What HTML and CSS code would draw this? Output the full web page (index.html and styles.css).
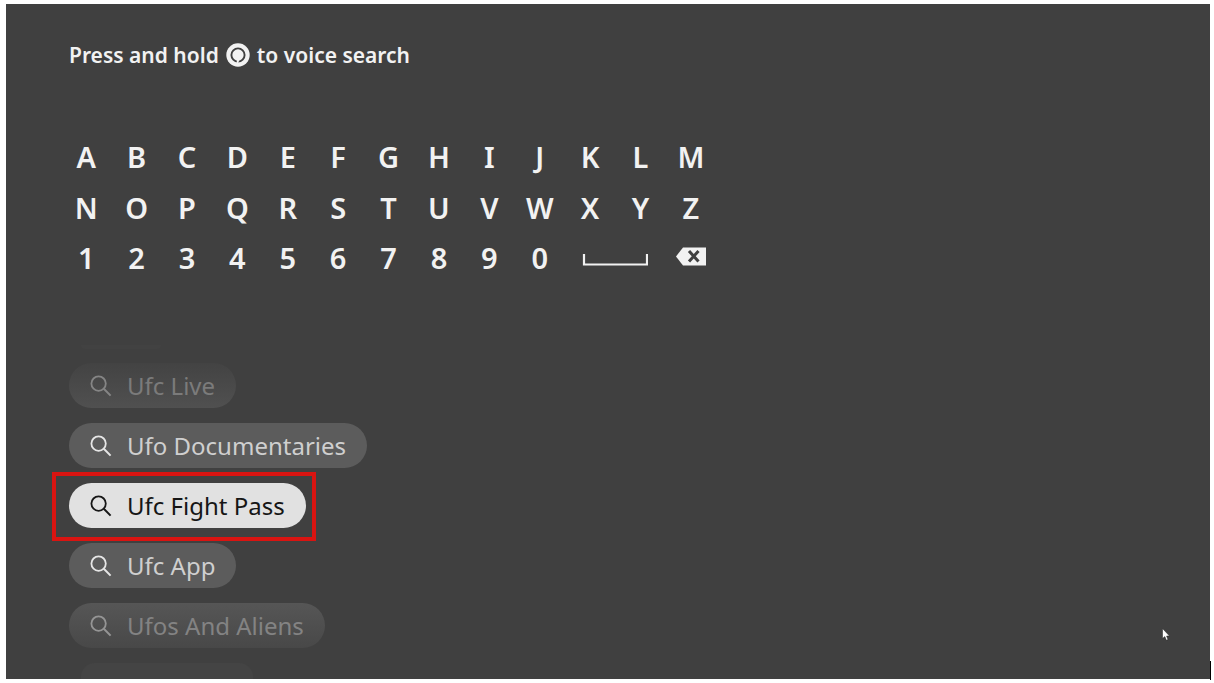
FILE: index.html
```
<!DOCTYPE html>
<html lang="en">
<head>
  <meta charset="UTF-8">
  <meta name="viewport" content="width=device-width, initial-scale=1.0">
  <title>Search</title>
  <link rel="stylesheet" href="styles.css">
</head>
<body>
  <svg class="defs" width="0" height="0" aria-hidden="true">
    <symbol id="search" viewBox="0 0 22 22">
      <circle cx="8.6" cy="8.6" r="7.2" fill="none" stroke="currentColor" stroke-width="1.8"/>
      <path d="M13.8 13.8 L20.6 20.6" fill="none" stroke="currentColor" stroke-width="2"/>
    </symbol>
  </svg>

  <main class="screen">
    <h1 class="hint">
      <span>Press and hold</span>
      <svg class="voice" viewBox="0 0 24 24" role="img" aria-label="the voice button">
        <circle cx="12" cy="12" r="11.7" fill="#f2f2f2"/>
        <circle cx="12" cy="12" r="6.6" fill="none" stroke="#404040" stroke-width="1.9"/>
        <path d="M10.8 16 H13.8 L12.2 20 H10.8 Z" fill="#f2f2f2"/>
      </svg>
      <span>to voice search</span>
    </h1>

    <div class="keyboard">
      <button>A</button>
      <button>B</button>
      <button>C</button>
      <button>D</button>
      <button>E</button>
      <button>F</button>
      <button>G</button>
      <button>H</button>
      <button>I</button>
      <button>J</button>
      <button>K</button>
      <button>L</button>
      <button>M</button>
      <button>N</button>
      <button>O</button>
      <button>P</button>
      <button>Q</button>
      <button>R</button>
      <button>S</button>
      <button>T</button>
      <button>U</button>
      <button>V</button>
      <button>W</button>
      <button>X</button>
      <button>Y</button>
      <button>Z</button>
      <button>1</button>
      <button>2</button>
      <button>3</button>
      <button>4</button>
      <button>5</button>
      <button>6</button>
      <button>7</button>
      <button>8</button>
      <button>9</button>
      <button>0</button>
      <button class="space" aria-label="Space">
        <svg width="66" height="22" viewBox="0 0 66 22"><path d="M2 7 V17.5 H65 V7" fill="none" stroke="currentColor" stroke-width="2.2"/></svg>
      </button>
      <button aria-label="Delete">
        <svg width="30" height="22" viewBox="0 0 30 22">
          <path d="M0 9.5 L7 0.5 H30 V18.5 H7 Z" fill="currentColor"/>
          <path d="M13 4 L22.5 14.5 M22.5 4 L13 14.5" fill="none" stroke="#404040" stroke-width="3"/>
        </svg>
      </button>
    </div>

    <div class="peek peek-top"></div>
    <ul class="suggestions">
      <li><button class="pill fade-top"><svg><use href="#search"/></svg>Ufc Live</button></li>
      <li><button class="pill"><svg><use href="#search"/></svg>Ufo Documentaries</button></li>
      <li class="marked"><button class="pill selected"><svg><use href="#search"/></svg>Ufc Fight Pass</button></li>
      <li><button class="pill"><svg><use href="#search"/></svg>Ufc App</button></li>
      <li><button class="pill fade-bottom"><svg><use href="#search"/></svg>Ufos And Aliens</button></li>
    </ul>
    <div class="peek peek-bottom"></div>

    <svg class="cursor" viewBox="0 0 8 13" aria-hidden="true">
      <path d="M0.5 0.5 V10.5 L2.8 8.6 L4.4 12.3 L6 11.6 L4.6 8 H7.5 Z" fill="#fff" stroke="#222" stroke-width="0.5"/>
    </svg>
  </main>
</body>
</html>
```
FILE: styles.css
```
* {
  box-sizing: border-box;
}

body {
  margin: 0;
  padding: 4px 4px 4px 6px;
  min-height: 100vh;
  display: flex;
  background: #fff;
  font-family: "Noto Sans", "Open Sans", sans-serif;
  color: #f2f2f2;
}

button {
  font: inherit;
  color: inherit;
  background: none;
  border: none;
  padding: 0;
  cursor: pointer;
}

.defs {
  position: absolute;
}

.screen {
  flex: 1;
  position: relative;
  display: flex;
  flex-direction: column;
  padding: 35px 63px 0;
  background: #404040;
  overflow: hidden;
}

/* Black sliver at the lower right of the screen */
body::after {
  content: "";
  position: absolute;
  right: 3px;
  bottom: 3px;
  width: 1px;
  height: 19px;
  background: #000;
}

.hint {
  display: flex;
  align-items: center;
  gap: 7px;
  margin: 0;
  font-size: 21px;
  line-height: 32px;
  font-weight: 600;
}

.voice {
  width: 24px;
  height: 24px;
}

/* Keyboard */
.keyboard {
  display: grid;
  grid-template-columns: repeat(13, 1fr);
  width: 100%;
  max-width: 655px;
  margin: 61px 0 0 -8px;
  font-size: 29px;
  line-height: 40px;
  font-weight: 600;
}

.keyboard button {
  display: flex;
  align-items: center;
  justify-content: center;
  aspect-ratio: 1;
}

.keyboard .space {
  grid-column: span 2;
  aspect-ratio: 2;
}

/* Suggestions */
.suggestions {
  list-style: none;
  margin: 0;
  padding: 0;
  display: flex;
  flex-direction: column;
  align-items: flex-start;
  gap: 15px;
}

.suggestions li {
  display: flex;
  position: relative;
}

.pill {
  display: flex;
  align-items: center;
  gap: 15px;
  height: 45px;
  padding: 0 21px;
  border-radius: 23px;
  background: #5c5c5c;
  color: #cfcfcf;
  font-size: 24px;
  white-space: nowrap;
}

.pill svg {
  width: 22px;
  height: 22px;
  color: #e6e6e6;
}

.selected {
  background: #e1e1e1;
  color: #161616;
}

.selected svg {
  color: #161616;
}

.fade-top {
  background: linear-gradient(#434343, #505050);
  color: #7b7b7b;
}

.fade-top svg {
  color: #858585;
}

.fade-bottom {
  background: linear-gradient(#565656, #484848);
  color: #838383;
}

.fade-bottom svg {
  color: #959595;
}

.marked::after {
  content: "";
  position: absolute;
  inset: -11px -10px -13px -17px;
  border: 4px solid #d91411;
  pointer-events: none;
}

/* Edges of the suggestions scrolled out of view */
.peek {
  margin-left: 12px;
  background: #444;
}

.peek-top {
  width: 80px;
  height: 4px;
  margin-top: 62px;
  margin-bottom: 14px;
  background: #424242;
  border-radius: 0 0 12px 12px;
}

.peek-bottom {
  width: 172px;
  flex: 1;
  margin-top: 15px;
  border-radius: 14px 14px 0 0;
}

.cursor {
  position: absolute;
  right: 40px;
  bottom: 38px;
  width: 8px;
  height: 13px;
}
```
